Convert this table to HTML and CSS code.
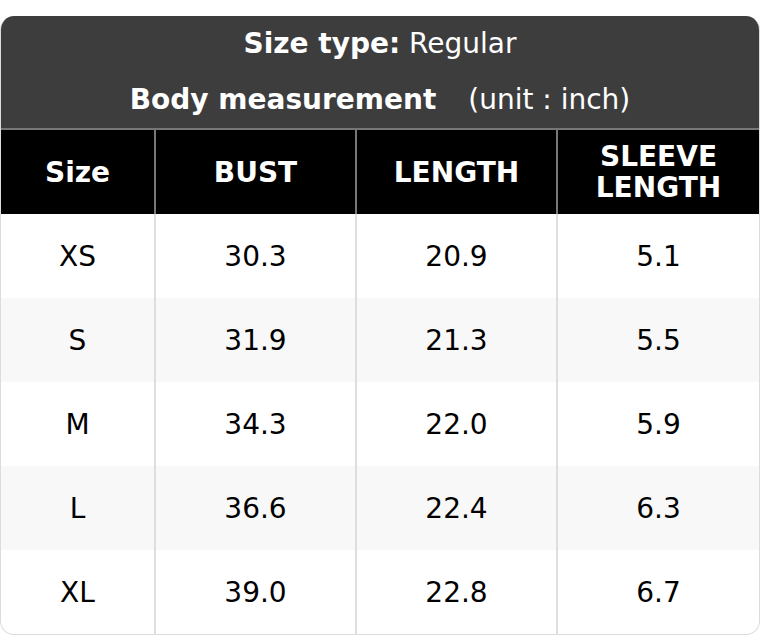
FILE: index.html
```html
<!DOCTYPE html>
<html lang="en">
<head>
<meta charset="utf-8">
<title>Size chart</title>
<link rel="stylesheet" href="styles.css">
</head>
<body>
<div class="card">
  <div class="title">
    <div class="title-line"><b>Size type:</b> Regular</div>
    <div class="title-line"><b class="gap">Body measurement</b>(unit : inch)</div>
  </div>
  <table class="chart">
    <colgroup>
      <col class="c1"><col class="c2"><col class="c3"><col class="c4">
    </colgroup>
    <thead>
      <tr><th>Size</th><th>BUST</th><th>LENGTH</th><th>SLEEVE<br>LENGTH</th></tr>
    </thead>
    <tbody>
      <tr><td>XS</td><td>30.3</td><td>20.9</td><td>5.1</td></tr>
      <tr><td>S</td><td>31.9</td><td>21.3</td><td>5.5</td></tr>
      <tr><td>M</td><td>34.3</td><td>22.0</td><td>5.9</td></tr>
      <tr><td>L</td><td>36.6</td><td>22.4</td><td>6.3</td></tr>
      <tr><td>XL</td><td>39.0</td><td>22.8</td><td>6.7</td></tr>
    </tbody>
  </table>
</div>
</body>
</html>
```
FILE: styles.css
```css
* { box-sizing: border-box; }
html, body { margin: 0; padding: 0; background: #fff; }
body {
  padding-top: 16px;
  font-family: "DejaVu Sans", sans-serif;
  color: #000;
}
.card {
  width: 760px;
  border-radius: 14px;
  overflow: hidden;
  border: 1px solid #dcdcdc;
  border-top: none;
}
.title {
  background: #3d3d3d;
  color: #fff;
  text-align: center;
  font-size: 28px;
}
.title-line {
  height: 56px;
  line-height: 56px;
}
.title-line .gap { margin-right: 32px; }
.chart {
  width: 100%;
  border-collapse: collapse;
  table-layout: fixed;
  font-size: 28px;
}
.c1 { width: 154px; }
.c2 { width: 201px; }
.c3 { width: 201px; }
.chart th {
  background: #000;
  color: #fff;
  font-weight: bold;
  height: 85px;
  line-height: 31px;
  border-top: 2px solid #777;
  border-left: 2px solid #777;
  border-right: 2px solid #777;
  padding: 0 4px;
}
.chart th:first-child, .chart td:first-child { border-left: none; }
.chart th:last-child, .chart td:last-child { border-right: none; }
.chart td {
  height: 84px;
  text-align: center;
  font-weight: normal;
  border-left: 2px solid #dedede;
  border-right: 2px solid #dedede;
  padding: 0;
}
.chart tbody tr:nth-child(even) td { background: #f8f8f8; }
```
